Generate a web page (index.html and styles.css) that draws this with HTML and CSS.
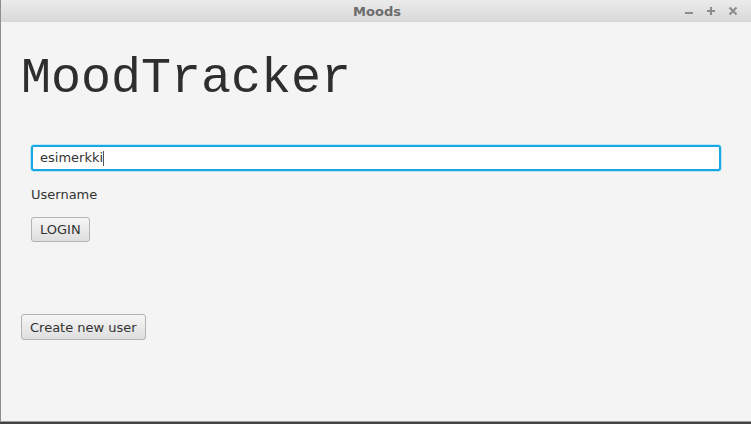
FILE: index.html
```html
<!DOCTYPE html>
<html>
<head>
<meta charset="utf-8">
<link rel="stylesheet" href="styles.css">
</head>
<body>
<div class="window">
  <div class="titlebar">
    <span class="title">Moods</span>
    <div class="controls">
      <svg class="ctl" width="10" height="10" viewBox="0 0 10 10"><rect x="1" y="6" width="8" height="2" fill="#8c8c8c"/></svg>
      <svg class="ctl" width="10" height="10" viewBox="0 0 10 10"><rect x="1" y="4" width="8" height="2" fill="#8c8c8c"/><rect x="4" y="1" width="2" height="8" fill="#8c8c8c"/></svg>
      <svg class="ctl" width="10" height="10" viewBox="0 0 10 10"><path d="M1.5 1.5 L8.5 8.5 M8.5 1.5 L1.5 8.5" stroke="#8c8c8c" stroke-width="2"/></svg>
    </div>
  </div>
  <div class="content">
    <h1 class="heading">MoodTracker</h1>
    <div class="login">
      <div class="field">esimerkki<span class="caret"></span></div>
      <div class="label">Username</div>
      <button class="btn">LOGIN</button>
    </div>
    <button class="btn create">Create new user</button>
  </div>
</div>
<div class="desk"></div>
</body>
</html>
```
FILE: styles.css
```css
html, body {
  margin: 0;
  padding: 0;
  background: #3a3a3a;
  overflow: hidden;
}
.window {
  width: 750px;
  height: 421px;
  border-left: 1px solid #8e8e8e;
  border-bottom: 1px solid #9a9a9a;
  background: #f4f4f4;
  display: flex;
  flex-direction: column;
  font-family: "DejaVu Sans", sans-serif;
}
.titlebar {
  height: 22px;
  flex: none;
  background: linear-gradient(#ebebeb, #d8d8d8);
  display: flex;
  align-items: center;
  justify-content: center;
  position: relative;
}
.title {
  font-weight: bold;
  font-size: 13px;
  color: #6c6c6c;
  padding-left: 2px;
}
.controls {
  position: absolute;
  right: 13px;
  top: 6px;
  display: flex;
  gap: 12px;
}
.ctl { display: block; }
.content {
  flex: 1;
  padding: 31px 30px 0 20px;
  display: flex;
  flex-direction: column;
  align-items: flex-start;
}
.heading {
  margin: 0;
  font-family: "Liberation Mono", monospace;
  font-weight: normal;
  font-size: 50px;
  line-height: 52px;
  color: #2e2e2e;
}
.login {
  align-self: stretch;
  padding-left: 10px;
  margin-top: 40px;
  display: flex;
  flex-direction: column;
  align-items: flex-start;
}
.field {
  align-self: stretch;
  height: 26px;
  box-sizing: border-box;
  border: 2px solid #1aa6e0;
  border-radius: 3px;
  background: #fff;
  box-shadow: 0 0 0 1px #bfe6f6;
  padding-left: 7px;
  font-size: 13px;
  line-height: 22px;
  color: #333;
  display: flex;
  align-items: center;
}
.caret {
  display: inline-block;
  width: 1px;
  height: 15px;
  background: #555;
}
.label {
  margin-top: 16px;
  font-size: 13px;
  line-height: 16px;
  color: #333;
}
.btn {
  margin: 14px 0 0 0;
  height: 25px;
  box-sizing: border-box;
  border: 1px solid #b2b2b2;
  border-radius: 3px;
  background: linear-gradient(#f6f6f6, #dedede);
  font-family: "DejaVu Sans", sans-serif;
  font-size: 13px;
  color: #333;
  padding: 0 8px;
  line-height: 23px;
}
.create {
  margin-top: 72px;
  height: 26px;
}
.desk {
  height: 3px;
  background: #444;
}
```
